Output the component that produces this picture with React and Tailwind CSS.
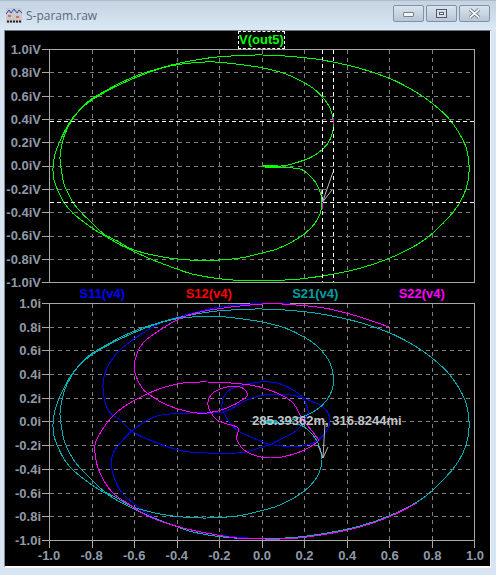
import React from "react";

const smooth = (pts) => {
  let d = `M${pts[0][0]} ${pts[0][1]}`;
  for (let i = 0; i < pts.length - 1; i++) {
    const p0 = pts[Math.max(i - 1, 0)];
    const p1 = pts[i];
    const p2 = pts[i + 1];
    const p3 = pts[Math.min(i + 2, pts.length - 1)];
    const c1 = [p1[0] + (p2[0] - p0[0]) / 6, p1[1] + (p2[1] - p0[1]) / 6];
    const c2 = [p2[0] - (p3[0] - p1[0]) / 6, p2[1] - (p3[1] - p1[1]) / 6];
    d += `C${c1[0].toFixed(1)} ${c1[1].toFixed(1)} ${c2[0].toFixed(1)} ${c2[1].toFixed(1)} ${p2[0]} ${p2[1]}`;
  }
  return d;
};

const TEAL = [[265,421],[278,421],[265,421.5],[265,422.5],[285,421.5],[295,419],[310,413.6],[322,405.5],[330,395],[333.5,381],[330,363],[318,347],[304,337],[285,328],[262,322],[235,318],[210,316],[183,318],[163,322],[133,333],[100,349.5],[85,360],[72,374],[62,392],[55,410],[53,424],[54,436],[58,447],[64,459],[73,470],[92,485],[105,493],[120,502],[147,515],[167,523],[193,532],[223,537],[250,538.7],[293,537.5],[327,533],[360,526],[390,515.5],[417,502],[433,490],[453,469],[463,453],[468,437],[469,421],[465,400],[450,375],[432,358],[415,346],[390,333],[360,322.5],[327,315],[303,311.5],[262,309],[217,311],[183,316.5],[163,321.5],[133,331.5],[100,348.5],[85,359],[72,375],[64,392],[60,413],[62,430],[65,443],[75,462],[92,480],[105,492],[117,498],[133,507],[160,514],[183,517],[207,518],[237,516],[260,511],[280,505],[303,492],[317,477],[322,460],[318,443],[310,432],[300,425],[282,423.5],[265,423.5]];

const MAGENTA = [[389,327],[360,317],[327,308.5],[290,304.5],[262,304],[210,310],[183,317],[160,330],[143,343],[135,360],[135,373],[142,388],[150,395],[167,405],[190,412],[207,413],[227,408],[245,398],[247,393],[240,387],[227,387],[213,393],[208,405],[217,420],[237,427],[238,432],[237,440],[247,452],[270,458],[297,453],[317,442],[315,435],[303,420],[293,403],[277,393],[250,385],[207,382],[177,384],[147,394],[117,412],[98,437],[95,453],[100,473],[112,492],[127,503],[150,517],[183,528],[217,535],[237,538],[265,539],[293,538.5],[327,534],[360,527],[390,516.5],[417,503]];

const BLUE_A = [[293,538],[265,539],[217,535],[183,528],[153,517],[133,503],[120,490],[112,470],[112,457],[117,447],[133,430],[157,416],[190,413],[223,412],[247,400],[265,395],[290,395],[303,398],[323,407],[330,420],[325,433],[313,443],[293,447],[270,445],[250,451],[237,453],[207,453],[183,451],[157,443],[133,432],[120,420],[108,410],[103,387],[107,368],[120,350],[140,335],[163,322],[193,313],[220,307],[250,304],[290,304]];

const BLUE_B = [[270,445],[283,438],[297,430],[308,413],[303,398],[293,390],[277,383],[260,382],[240,386],[227,392],[222,407],[230,423],[240,432],[270,445]];

const toTop = (pts) => pts.map(([x, y]) => [x, +(165.9 + (y - 421.8) * 0.983).toFixed(1)]);

const GX = [92.5, 134.5, 177.5, 219.5, 262.5, 304.5, 347.5, 389.5, 432.5];

const Curve = ({ pts, color, w = 1 }) => (
  <path d={smooth(pts)} fill="none" stroke={color} strokeWidth={w} shapeRendering="crispEdges" />
);

const Frame = ({ top, bottom, rows, xTicks }) => (
  <g shapeRendering="crispEdges">
    {GX.map((x) => (
      <line key={x} x1={x} x2={x} y1={top} y2={bottom} stroke="#808080" strokeDasharray="4 4" />
    ))}
    {rows.map((y) => (
      <line key={y} x1={49.5} x2={474.5} y1={y} y2={y} stroke="#808080" strokeDasharray="4 4" />
    ))}
    {rows.map((y) => (
      <line key={`t${y}`} x1={42} x2={49} y1={y} y2={y} stroke="#a8a8a8" />
    ))}
    <path d={`M42 ${top}H474.5V${bottom}H42M49.5 ${top}V${bottom}`} fill="none" stroke="#a8a8a8" />
    {xTicks && [49.5, ...GX, 474.5].map((x) => (
      <line key={x} x1={x} x2={x} y1={bottom} y2={bottom + 7} stroke="#a8a8a8" />
    ))}
  </g>
);

const YLabels = ({ items, height }) => (
  <div className="flex w-[36px] shrink-0 flex-col items-end justify-between -mt-[7px]" style={{ height }}>
    {items.map((t, i) => (
      <span key={i} className="h-[15px] text-[13px] font-bold leading-[15px] text-[#8f9aa6]">{t}</span>
    ))}
  </div>
);

const TOP_LABELS = ["1.0iV","0.8iV","0.6iV","0.4iV","0.2iV","0.0iV","-0.2iV","-0.4iV","-0.6iV","-0.8iV","-1.0iV"];
const BOT_LABELS = ["1.0i","0.8i","0.6i","0.4i","0.2i","0.0i","-0.2i","-0.4i","-0.6i","-0.8i","-1.0i"];
const X_LABELS = ["-1.0","-0.8","-0.6","-0.4","-0.2","0.0","0.2","0.4","0.6","0.8","1.0"];
const TOP_ROWS = [72.5,96.5,119.5,142.5,166.5,189.5,212.5,236.5,259.5];
const BOT_ROWS = [327.5,350.5,374.5,398.5,421.5,445.5,469.5,493.5,516.5];

const CaptionButton = ({ children }) => (
  <div className="flex h-[17px] w-[31px] items-center justify-center rounded-[2px] border border-[#8292a6] bg-gradient-to-b from-[#d9e3ee] to-[#b9c6d6]">
    {children}
  </div>
);

export default function App() {
  return (
    <div className="flex h-[575px] w-[496px] flex-col overflow-hidden border-t border-[#aebccb] bg-[#d7e4f2] font-['Liberation_Sans',sans-serif]">
      <div className="flex h-[29px] shrink-0 items-center bg-gradient-to-b from-[#c4d2e1] to-[#dbe8f5] pl-[6px] pr-[6px]">
        <svg width="16" height="15" viewBox="0 0 16 15" className="shrink-0">
          <rect width="16" height="15" fill="#c9c9c9" />
          <path d="M0 6 3 2 5 5 8 1 11 5 13 2 16 5" fill="none" stroke="#2244cc" />
          <path d="M2 8h3M10 9h3" stroke="#e01010" />
          <path d="M1 13.5h14" stroke="#222" strokeDasharray="2 1" strokeWidth="2" />
        </svg>
        <span className="ml-[4px] font-['Open_Sans',sans-serif] text-[12px] text-[#566a7c]">S-param.raw</span>
        <div className="ml-auto -mt-[5px] flex gap-[2px]">
          <CaptionButton>
            <div className="mt-[2px] h-[5px] w-[11px] rounded-[1px] border border-[#75818f] bg-[#f2f4f7]" />
          </CaptionButton>
          <CaptionButton>
            <div className="flex h-[9px] w-[11px] items-center justify-center border border-[#4c5a69] bg-[#d5dee9]">
              <div className="h-[3px] w-[5px] border border-[#4c5a69] bg-white" />
            </div>
          </CaptionButton>
          <CaptionButton>
            <svg width="13" height="11" viewBox="0 0 13 11">
              <path d="M2 1.5 11 9.5M11 1.5 2 9.5" stroke="#5a6673" strokeWidth="3.4" />
              <path d="M2 1.5 11 9.5M11 1.5 2 9.5" stroke="#f4f6f8" strokeWidth="1.8" />
            </svg>
          </CaptionButton>
        </div>
      </div>

      <div className="ml-[4px] mr-[5px] h-[538px] shrink-0 border-x border-t border-b-2 border-l-[#868c94] border-r-[#f4f7fa] border-t-[#6d747c] border-b-[#f7f9fb] bg-black">
        <div className="flex h-[18px] justify-center pl-[43px] pr-[15px]">
          <span className="h-[18px] border border-dashed border-white text-[13px] font-bold leading-[16px] text-[#00ff00]">V(out5)</span>
        </div>

        <div className="flex h-[234px] items-start">
          <YLabels items={TOP_LABELS} height={248} />
          <svg width="435" height="234" viewBox="41 49 435 234" className="block shrink-0">
            <Frame top={49.5} bottom={282.5} rows={TOP_ROWS} />
            <Curve pts={toTop(TEAL)} color="#00ff00" />
            <g shapeRendering="crispEdges" stroke="#ffffff" strokeDasharray="4 3">
              <line x1={322.5} x2={322.5} y1={50} y2={282} />
              <line x1={333.5} x2={333.5} y1={50} y2={282} />
              <line x1={50} x2={474} y1={121.5} y2={121.5} />
              <line x1={50} x2={474} y1={202.5} y2={202.5} />
            </g>
            <path d="M322.5 202 333 172M322.5 202 332 190M322.5 202 321 189" fill="none" stroke="#b8b8b8" />
            <path d="M322.5 203v6M333.5 118v6M322.5 60v2" stroke="#ff00ff" />
          </svg>
        </div>

        <div className="grid h-[20px] grid-cols-4 items-center pl-[44px] pr-[15px] text-center text-[13px] font-bold leading-[15px]">
          <span className="text-[#0000ff]">S11(v4)</span>
          <span className="text-[#ff0000]">S12(v4)</span>
          <span className="text-[#00a0a0]">S21(v4)</span>
          <span className="text-[#ff00ff]">S22(v4)</span>
        </div>

        <div className="flex h-[245px] items-start">
          <YLabels items={BOT_LABELS} height={252} />
          <div className="relative shrink-0">
            <svg width="435" height="245" viewBox="41 303 435 245" className="block">
              <Frame top={303.5} bottom={540.5} rows={BOT_ROWS} xTicks />
              <Curve pts={BLUE_A} color="#0000ff" />
              <Curve pts={BLUE_B} color="#0000ff" />
              <Curve pts={TEAL} color="#00b0b4" />
              <Curve pts={MAGENTA} color="#ff00ff" />
              <path d="M325 423 323 458M318 445 323 458 328 447" fill="none" stroke="#b8b8b8" />
            </svg>
            <span className="absolute left-[211px] top-[110px] whitespace-nowrap text-[13px] font-bold leading-[15px] text-[#c0c4c8]">285.39362m, 316.8244mi</span>
          </div>
        </div>

        <div className="flex h-[17px] justify-between pl-[44px] pr-[15px]">
          {X_LABELS.map((t) => (
            <div key={t} className="flex w-0 justify-center">
              <span className="text-[13px] font-bold leading-[16px] text-[#8f9aa6]">{t}</span>
            </div>
          ))}
        </div>
      </div>
    </div>
  );
}
